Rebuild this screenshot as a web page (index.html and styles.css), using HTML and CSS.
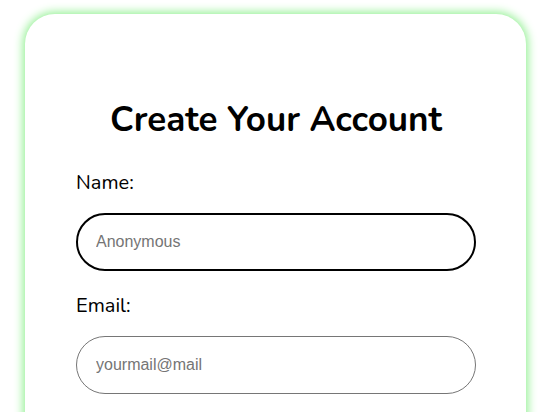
FILE: index.html
```html
<!DOCTYPE html>
<html lang="en">
<head>
<meta charset="utf-8">
<title>Create Your Account</title>
<link rel="stylesheet" href="styles.css">
</head>
<body>
<div class="card">
  <h1 class="title">Create Your Account</h1>
  <form class="form">
    <label class="label label-first" for="name">Name:</label>
    <input class="field field-active" id="name" type="text" placeholder="Anonymous">
    <label class="label" for="email">Email:</label>
    <input class="field" id="email" type="email" placeholder="yourmail@mail">
  </form>
</div>
</body>
</html>
```
FILE: styles.css
```css
html, body {
  margin: 0;
  padding: 0;
  background: #ffffff;
  overflow: hidden;
}
body {
  font-family: "Nunito", "Lato", "Open Sans", sans-serif;
  color: #000;
}
.card {
  box-sizing: border-box;
  width: 501px;
  margin: 14px auto 0;
  padding: 82px 50px 40px 51px;
  background: #fff;
  border-radius: 30px;
  box-shadow: 0 0 10px 2px #93f093;
  min-height: 500px;
}
.title {
  margin: 0 0 25px;
  text-align: center;
  font-size: 35px;
  font-weight: 700;
  line-height: 48px;
}
.form {
  display: flex;
  flex-direction: column;
}
.label {
  font-size: 20px;
  line-height: 27px;
  margin-bottom: 17px;
}
.field {
  box-sizing: border-box;
  width: 400px;
  height: 58px;
  padding: 0 19px;
  border: 1px solid #767676;
  border-radius: 29px;
  font-family: "Liberation Sans", Arial, sans-serif;
  font-size: 16px;
  color: #000;
  margin-bottom: 21px;
  outline: none;
}
.field::placeholder {
  color: #757575;
}
.field-active {
  border: 2px solid #000;
  padding: 0 18px;
}
```
